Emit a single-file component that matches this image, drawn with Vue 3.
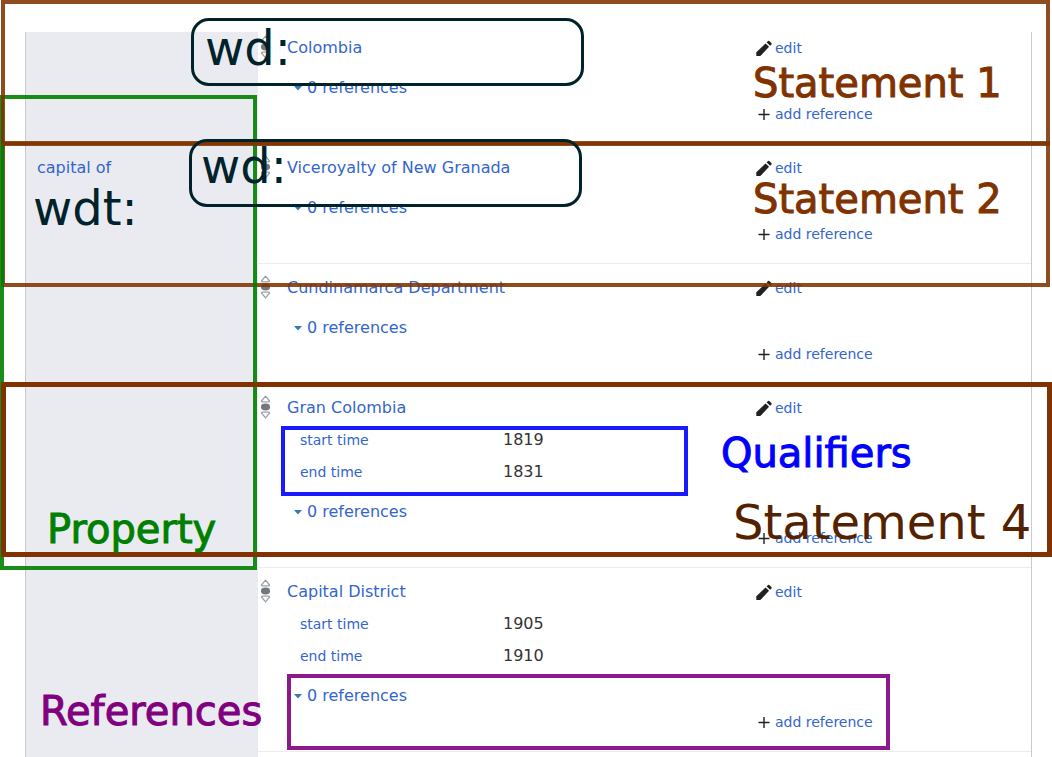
<script setup>
const statements = [
  { value: 'Colombia', qualifiers: [] },
  { value: 'Viceroyalty of New Granada', qualifiers: [] },
  { value: 'Cundinamarca Department', qualifiers: [] },
  {
    value: 'Gran Colombia',
    qualifiers: [
      { name: 'start time', value: '1819' },
      { name: 'end time', value: '1831' },
    ],
  },
  {
    value: 'Capital District',
    qualifiers: [
      { name: 'start time', value: '1905' },
      { name: 'end time', value: '1910' },
    ],
  },
]
</script>

<template>
  <div class="page">
    <main class="group">
      <div class="property"><a href="#">capital of</a></div>
      <div class="statements">
        <section v-for="s in statements" :key="s.value" class="statement">
          <div class="claim">
            <svg class="rank" viewBox="0 0 11 24" aria-hidden="true">
              <path d="M5.5 1.2 L9.4 5.8 Q9.7 6.8 8.6 6.8 H2.4 Q1.3 6.8 1.6 5.8 Z" />
              <path d="M5.5 22.8 L9.4 18.2 Q9.7 17.2 8.6 17.2 H2.4 Q1.3 17.2 1.6 18.2 Z" />
              <ellipse cx="5.5" cy="12" rx="4.6" ry="3.4" />
            </svg>
            <a href="#" class="value">{{ s.value }}</a>
            <a href="#" class="action">
              <svg class="icon" viewBox="0 0 16 16" aria-hidden="true">
                <path d="M0.3 16 V12.2 L9.6 3.4 L13.1 6.8 L4.3 16 Z M10.7 2.4 L12 1.1 Q12.8 0.4 13.6 1.2 L15.4 3 Q16.1 3.8 15.4 4.6 L14.1 5.8 Z" />
              </svg>
              <span>edit</span>
            </a>
          </div>
          <dl v-if="s.qualifiers.length" class="qualifiers">
            <div v-for="q in s.qualifiers" :key="q.name" class="qualifier">
              <dt><a href="#">{{ q.name }}</a></dt>
              <dd>{{ q.value }}</dd>
            </div>
          </dl>
          <button type="button" class="toggle">
            <svg viewBox="0 0 8 5" aria-hidden="true"><path d="M0 0 H8 L4 4.6 Z" /></svg>
            <span>0 references</span>
          </button>
          <div class="add">
            <a href="#" class="action">
              <svg class="icon" viewBox="0 0 16 16" aria-hidden="true">
                <path d="M7.3 3 H8.7 V7.8 H13.5 V9.2 H8.7 V14 H7.3 V9.2 H2.5 V7.8 H7.3 Z" />
              </svg>
              <span>add reference</span>
            </a>
          </div>
        </section>
      </div>
    </main>

    <div class="frame brown second"></div>
    <div class="frame green"></div>
    <div class="frame brown first"></div>
    <div class="frame brown fourth"></div>
    <div class="frame blue"></div>
    <div class="frame purple"></div>
    <div class="frame entity entity-a"></div>
    <div class="frame entity entity-b"></div>

    <div class="note big dark n-wd-a">wd:</div>
    <div class="note big dark n-wd-b">wd:</div>
    <div class="note big dark n-wdt">wdt:</div>
    <div class="note rust n-s1">Statement 1</div>
    <div class="note rust n-s2">Statement 2</div>
    <div class="note big umber n-s4">Statement 4</div>
    <div class="note navy n-qual">Qualifiers</div>
    <div class="note leaf n-prop">Property</div>
    <div class="note plum n-ref">References</div>
  </div>
</template>

<style>
body {
  margin: 0;
  background: #fff;
}
</style>

<style scoped>
.page {
  position: relative;
  min-height: 100vh;
  box-sizing: border-box;
  padding: 32px 20px 0 25px;
  display: flex;
  overflow: hidden;
  font-family: "DejaVu Sans", sans-serif;
  font-size: 16px;
  line-height: 20px;
}
a {
  color: #3366cc;
  text-decoration: none;
}
.group {
  flex: 1;
  display: grid;
  grid-template-columns: 232px 1fr;
  border: 0 solid #c8ccd1;
  border-width: 0 1px;
}
.property {
  background: #eaebf0;
  padding: 126px 11px 0;
}
.statement {
  padding: 8px 0 19px;
  border-bottom: 1px solid #eaecf0;
}
.statement:first-child {
  padding-top: 0;
}
.claim {
  display: flex;
  align-items: center;
  height: 32px;
}
.rank {
  width: 11px;
  height: 24px;
  margin: 0 16px 2px 2px;
  fill: #72777d;
}
.rank path {
  fill: none;
  stroke: #9a9da1;
  stroke-width: 1.3;
}
.value {
  flex: 1;
}
.action {
  width: 275px;
  display: flex;
  align-items: center;
  gap: 3px;
  font-size: 14px;
}
.icon {
  width: 16px;
  height: 16px;
  fill: #202122;
}
.qualifiers {
  margin: 0;
}
.qualifier {
  display: grid;
  grid-template-columns: 203px 1fr;
  align-items: center;
  height: 32px;
  padding-left: 42px;
}
.qualifier dt {
  font-size: 14px;
}
.qualifier dd {
  margin: 0;
  color: #333;
}
.toggle {
  display: flex;
  align-items: center;
  gap: 5px;
  height: 32px;
  margin: 8px 0 0 36px;
  padding: 0;
  border: 0;
  background: none;
  color: #3366cc;
  font: inherit;
  cursor: pointer;
}
.toggle svg {
  width: 8px;
  height: 5px;
  fill: #347bb5;
}
.add {
  display: flex;
  justify-content: flex-end;
}

.frame {
  position: absolute;
  box-sizing: border-box;
  border: 4px solid;
  pointer-events: none;
}
.brown {
  border-color: rgba(128, 51, 0, 0.88);
  left: 1px;
  right: 2px;
  height: 146px;
}
.first {
  top: 0;
}
.second {
  top: 141px;
}
.fourth {
  top: 382px;
  right: 0;
  height: 175px;
  border: 5px solid #803300;
}
.green {
  left: 0;
  top: 95px;
  width: 257px;
  height: 475px;
  border-color: rgba(0, 128, 0, 0.9);
}
.blue {
  left: 281px;
  top: 426px;
  width: 407px;
  height: 70px;
  border-color: #1a1aff;
}
.purple {
  left: 287px;
  top: 674px;
  width: 603px;
  height: 76px;
  border-color: #8d1a8d;
}
.entity {
  width: 393px;
  height: 68px;
  border: 3px solid #00222b;
  border-radius: 18px;
}
.entity-a {
  left: 191px;
  top: 18px;
}
.entity-b {
  left: 189px;
  top: 139px;
}

.note {
  position: absolute;
  font-size: 40px;
  line-height: 48px;
  white-space: nowrap;
  -webkit-text-stroke: 1px currentColor;
  pointer-events: none;
}
.big {
  font-size: 48px;
  line-height: 56px;
  -webkit-text-stroke: 0;
}
.dark { color: #00222b; }
.rust { color: #803300; }
.umber { color: #552200; }
.navy { color: #0000ff; }
.leaf { color: #008000; }
.plum { color: #800080; }
.n-wd-a { left: 205px; top: 20px; }
.n-wd-b { left: 201px; top: 138px; }
.n-wdt { left: 33px; top: 180px; }
.n-s1 { left: 753px; top: 59px; }
.n-s2 { left: 753px; top: 175px; }
.n-s4 { left: 733px; top: 494px; }
.n-qual { left: 721px; top: 429px; }
.n-prop { left: 47px; top: 505px; }
.n-ref { left: 40px; top: 687px; }
</style>
